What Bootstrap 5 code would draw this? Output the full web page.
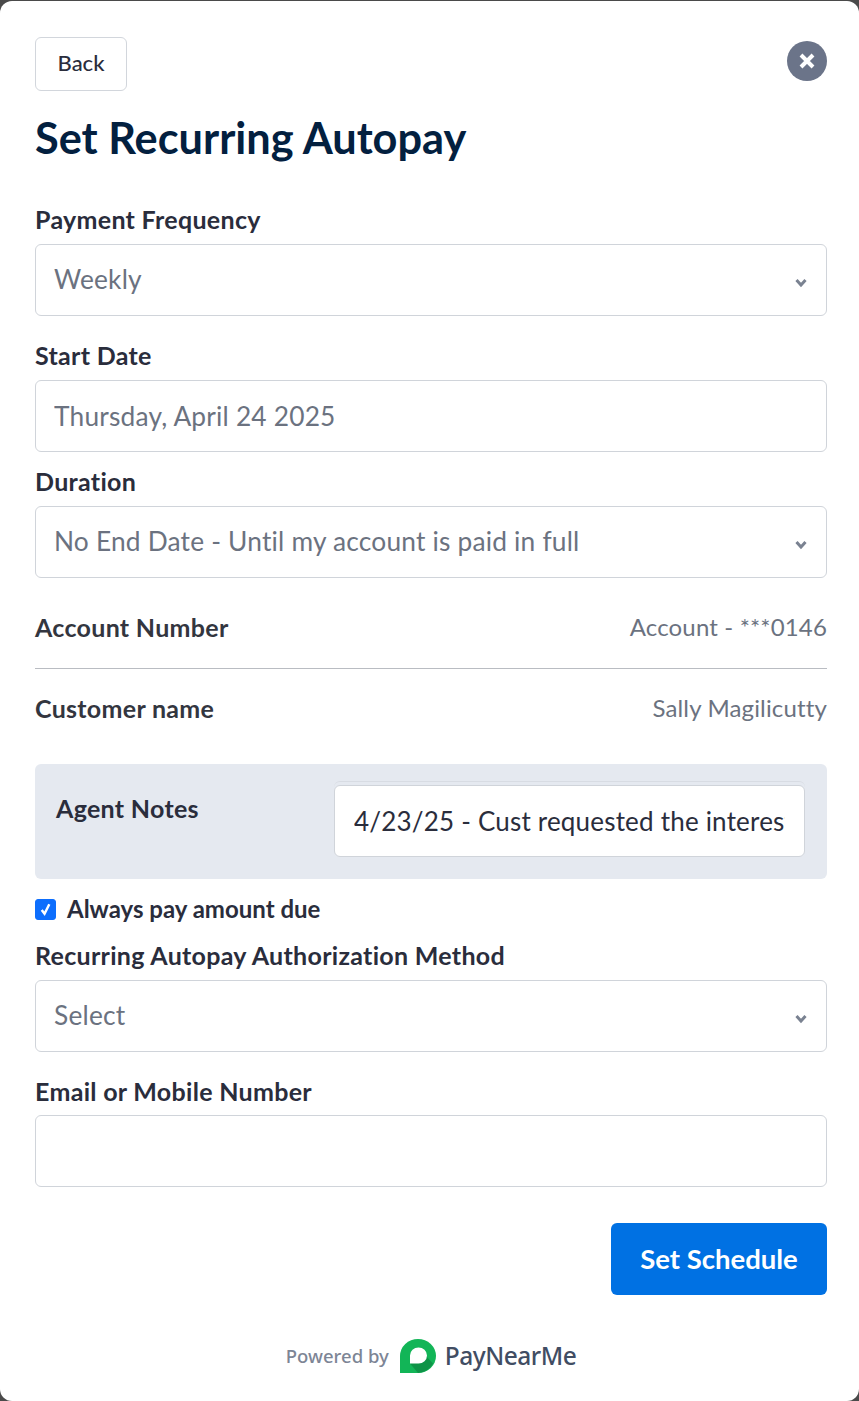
<!DOCTYPE html>
<html lang="en">

<head>
  <meta charset="UTF-8" />
  <meta name="viewport" content="width=device-width, initial-scale=1" />
  <title>Set Recurring Autopay</title>
  <link href="https://cdn.jsdelivr.net/npm/bootstrap@5.3.0/dist/css/bootstrap.min.css" rel="stylesheet">
  <style>
    html,
    body {
      height: 100%;
    }

    body {
      font-family: Lato, "Liberation Sans", sans-serif;
      background-color: #4a4a4a;
      color: #2a2d3c;
    }

    .sheet {
      background: #fff;
      height: 1400px;
      margin-top: 1px;
      border-radius: 12px;
      padding: 36px 32px 0 35px;
    }

    .back-btn {
      width: 92px;
      height: 54px;
      font-size: 22px;
      font-weight: 500;
      color: #2a2d3c;
      background: #fff;
      border: 1px solid #d2d6dc;
      border-radius: 6px;
      padding: 0 0 3px;
    }

    .close-dot {
      width: 40px;
      height: 40px;
      margin-top: 4px;
      border: 0;
      padding: 0;
      border-radius: 50%;
      background: #6b7489;
    }

    .page-title {
      font-size: 43.3px;
      font-weight: 700;
      line-height: 48px;
      color: #03203f;
      margin: 22px 0 43px;
    }

    .field-label {
      display: block;
      font-size: 25px;
      font-weight: 700;
      line-height: 30px;
      letter-spacing: .3px;
      margin-bottom: 10px;
    }

    .field-box,
    .field-box:disabled,
    .field-box[readonly] {
      height: 72px;
      font-size: 26.3px;
      letter-spacing: .2px;
      color: #6b7280;
      background-color: #fff;
      border: 1px solid #d0d4da;
      border-radius: 6px;
      padding: 0 18px;
    }

    select.field-box {
      background-image: url("data:image/svg+xml,%3csvg xmlns='http://www.w3.org/2000/svg' viewBox='0 0 12 10'%3e%3cpath fill='none' stroke='%237a8291' stroke-width='3' d='M1.500 2l4.500 5 4.500-5'/%3e%3c/svg%3e");
      background-size: 12px 10px;
      background-position: right 19px top 33px;
      padding-top: 0;
      padding-bottom: 0;
    }

    .gap-after {
      margin-bottom: 24px;
    }

    .gap-tight {
      margin-top: 14px;
    }

    .label-snug {
      margin-bottom: 9px;
    }

    .info-row {
      font-size: 25px;
      line-height: 30px;
      letter-spacing: .3px;
    }

    .info-first {
      margin-top: 34px;
    }

    .info-row span {
      font-size: 24px;
      letter-spacing: .15px;
      color: #6b7280;
    }

    .info-row strong {
      color: #33363f;
    }

    .row-rule {
      margin: 26px 0 24px;
      border-color: #b9bcc2;
      opacity: 1;
    }

    .notes-panel {
      background: #e5e9f0;
      border-radius: 6px;
      height: 115px;
      margin-top: 41px;
      padding: 17px 22px 0 21px;
    }

    .notes-panel .field-label {
      width: 278px;
      flex-shrink: 0;
      margin: 12px 0 0;
    }

    .notes-wrap {
      border-top: 1px solid #d8dce3;
      border-radius: 6px;
      padding-top: 3px;
      height: 76px;
    }

    .notes-box {
      height: 72px;
      font-size: 26px;
      letter-spacing: .2px;
      color: #2a2d3c;
      background: #fff;
      border: 1px solid #d0d4da;
      border-radius: 6px;
      padding: 0 19px;
    }

    .always-check {
      margin: 18px 0 19px;
      min-height: 0;
      padding: 0;
      gap: 11px;
    }

    .always-check .form-check-input {
      float: none;
      width: 21px;
      height: 21px;
      margin: 0;
      border-radius: 3px;
    }

    .always-check .form-check-input:checked[type=checkbox] {
      background-image: url("data:image/svg+xml,%3csvg xmlns='http://www.w3.org/2000/svg' viewBox='0 0 20 20'%3e%3cpath fill='none' stroke='%23fff' stroke-width='2.6' d='M6 10.500l3 4 5-10'/%3e%3c/svg%3e");
    }

    .always-check .form-check-label {
      font-size: 24px;
      font-weight: 700;
      line-height: 24px;
    }

    .action-row {
      margin-top: 36px;
    }

    .save-btn {
      width: 216px;
      height: 72px;
      font-size: 27.500px;
      font-weight: 700;
      color: #fff;
      background: #0071e3;
      border: 0;
      border-radius: 6px;
    }

    .powered-line {
      margin-top: 43px;
      gap: 11px;
    }

    .powered-line small {
      font-family: "Noto Sans", sans-serif;
      font-size: 18.5px;
      font-weight: 500;
      color: #7d8595;
      padding-bottom: 2px;
    }

    .powered-line b {
      font-family: "Noto Sans", sans-serif;
      font-size: 24.5px;
      font-weight: 500;
      color: #414d63;
      letter-spacing: -0.5px;
      margin-left: -2px;
    }
  </style>
</head>

<body>
  <div class="sheet">
    <div class="d-flex justify-content-between align-items-start">
      <button class="btn back-btn" type="button">Back</button>
      <button class="close-dot d-flex align-items-center justify-content-center" type="button" aria-label="Close">
        <svg width="18" height="18" viewBox="0 0 18 18">
          <path d="M3 3l12 12M15 3L3 15" stroke="#fff" stroke-width="4" />
        </svg>
      </button>
    </div>

    <h1 class="page-title">Set Recurring Autopay</h1>

    <form>
      <label class="field-label">Payment Frequency</label>
      <select class="form-select field-box gap-after">
        <option>Weekly</option>
      </select>

      <label class="field-label">Start Date</label>
      <input class="form-control field-box" type="text" value="Thursday, April 24 2025" readonly>

      <label class="field-label gap-tight">Duration</label>
      <select class="form-select field-box">
        <option>No End Date - Until my account is paid in full</option>
      </select>

      <div class="info-row info-first d-flex justify-content-between">
        <strong>Account Number</strong>
        <span>Account - ***0146</span>
      </div>
      <hr class="row-rule">
      <div class="info-row d-flex justify-content-between">
        <strong>Customer name</strong>
        <span>Sally Magilicutty</span>
      </div>

      <div class="notes-panel d-flex">
        <label class="field-label">Agent Notes</label>
        <div class="notes-wrap flex-grow-1">
          <input class="form-control notes-box" type="text" value="4/23/25 - Cust requested the interest be waived on the account">
        </div>
      </div>

      <div class="form-check always-check d-flex align-items-center">
        <input class="form-check-input" type="checkbox" id="alwaysPay" checked>
        <label class="form-check-label" for="alwaysPay">Always pay amount due</label>
      </div>

      <label class="field-label">Recurring Autopay Authorization Method</label>
      <select class="form-select field-box gap-after">
        <option>Select</option>
      </select>

      <label class="field-label label-snug">Email or Mobile Number</label>
      <input class="form-control field-box" type="text">

      <div class="action-row d-flex justify-content-end">
        <button class="btn save-btn" type="button">Set Schedule</button>
      </div>
    </form>

    <div class="powered-line d-flex align-items-center justify-content-center">
      <small>Powered by</small>
      <svg width="36" height="34" viewBox="0 0 36 36" preserveAspectRatio="none">
        <path d="M0 36V18A18 18 0 1 1 18 36Z" fill="#12b557" />
        <path d="M10 26L18 36A18 18 0 0 0 33 26L25 17Z" fill="#0e9347" />
        <path d="M10 26V17.500A8.500 8.500 0 1 1 18.500 26Z" fill="#fff" />
      </svg>
      <b>PayNearMe</b>
    </div>
  </div>
</body>

</html>
